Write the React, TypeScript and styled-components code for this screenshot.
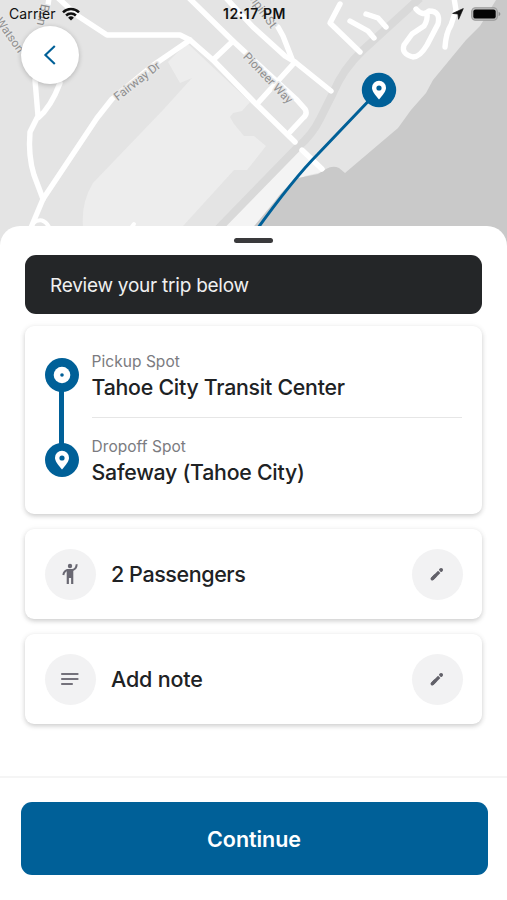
import React from 'react';
import styled, { createGlobalStyle } from 'styled-components';

const BLUE = '#006098';

const GlobalStyle = createGlobalStyle`
  * { box-sizing: border-box; }
  body { margin: 0; background: #fff; font-family: Inter, "Liberation Sans", sans-serif; }
  button { font: inherit; border: 0; padding: 0; cursor: pointer; }
`;

const Screen = styled.main`
  display: flex;
  flex-direction: column;
  width: 507px;
  height: 900px;
  overflow: hidden;
  background: #fff;
  color: #202224;
`;

const MapArea = styled.section`
  position: relative;
  flex: none;
  height: 226px;
`;

const MapCanvas = styled.svg`
  position: absolute;
  top: 0;
  left: 0;
  display: block;
`;

const StatusBar = styled.header`
  position: relative;
  display: grid;
  grid-template-columns: 1fr auto 1fr;
  align-items: center;
  height: 27px;
  padding: 0 6px 0 9px;
  color: #111;
`;

const StatusGroup = styled.div<{ $end?: boolean }>`
  display: flex;
  align-items: center;
  justify-content: ${(p) => (p.$end ? 'flex-end' : 'flex-start')};
  gap: ${(p) => (p.$end ? 7 : 6)}px;
`;

const Carrier = styled.span`
  font-size: 14px;
  line-height: 18px;
  letter-spacing: 0.1px;
`;

const Clock = styled.span`
  font-size: 14px;
  line-height: 18px;
  font-weight: 600;
  letter-spacing: 0.55px;
  margin-left: -1px;
`;

const BackButton = styled.button`
  position: absolute;
  top: 26px;
  left: 21px;
  display: grid;
  place-items: center;
  width: 58px;
  height: 58px;
  border-radius: 50%;
  background: #fff;
  box-shadow: 0 1px 5px rgba(0, 0, 0, 0.22);
`;

const Sheet = styled.section`
  position: relative;
  display: flex;
  flex: 1;
  flex-direction: column;
  border-radius: 20px 20px 0 0;
  background: #fff;
`;

const SheetBackdrop = styled.div`
  display: flex;
  flex: 1;
  background: linear-gradient(90deg, #e4e4e4 50%, #c9c9c9 50%) 0 0 / 100% 40px no-repeat;
`;

const Handle = styled.div`
  width: 39px;
  height: 5px;
  margin: 12px auto;
  border-radius: 3px;
  background: #3a3a3c;
`;

const Content = styled.div`
  display: flex;
  flex: 1;
  flex-direction: column;
  padding: 0 24.6px 0 25.4px;
`;

const Banner = styled.div`
  display: flex;
  align-items: center;
  height: 59px;
  margin-bottom: 12px;
  padding: 2px 24.6px 0;
  border-radius: 11px;
  background: #242628;
  color: #f0f0f0;
  font-size: 19px;
  letter-spacing: -0.24px;
`;

const Card = styled.div`
  border-radius: 9px;
  background: #fff;
  box-shadow: 0 2px 5px rgba(0, 0, 0, 0.19), 0 0 8px rgba(0, 0, 0, 0.03);
`;

const TripCard = styled(Card)`
  display: flex;
  gap: 12.6px;
  height: 188px;
  margin-bottom: 15px;
  padding: 0 20px 0 19.6px;
`;

const Rail = styled.div`
  display: flex;
  flex-direction: column;
  align-items: center;
  padding-top: 32px;
`;

const StopMarker = styled.div`
  display: grid;
  place-items: center;
  flex: none;
  width: 34px;
  height: 34px;
  border-radius: 50%;
  background: ${BLUE};
`;

const RailLine = styled.div`
  width: 5px;
  height: 53px;
  margin: -1px 0;
  background: ${BLUE};
`;

const Stops = styled.div`
  flex: 1;
  padding-top: 24px;
`;

const Stop = styled.div`
  height: 85px;
  & + & { padding-top: 17px; height: 84px; }
  &:first-child { height: 68px; border-bottom: 1px solid #e6e6e6; }
`;

const StopKind = styled.div`
  font-size: 15.5px;
  line-height: 23px;
  letter-spacing: 0.04px;
  color: #7b7b80;
`;

const StopName = styled.div`
  margin-top: -1px;
  font-size: 21.3px;
  line-height: 30px;
  font-weight: 450;
  letter-spacing: -0.24px;
`;

const OptionCard = styled(Card)`
  display: flex;
  align-items: center;
  height: 90px;
  margin-bottom: 15px;
  padding: 0 19.6px;
`;

const IconDisc = styled.div`
  display: grid;
  place-items: center;
  width: 51px;
  height: 51px;
  border-radius: 50%;
  background: #f2f2f3;
`;

const EditButton = styled(IconDisc).attrs({ as: 'button' })``;

const OptionLabel = styled.div<{ $spacing: number }>`
  flex: 1;
  padding-left: 15px;
  font-size: 21.5px;
  line-height: 30px;
  font-weight: 450;
  letter-spacing: ${(p) => p.$spacing}px;
`;

const Footer = styled.footer`
  height: 124px;
  padding: 24px 19.5px 0 20.5px;
  border-top: 2px solid #f5f5f5;
`;

const ContinueButton = styled.button`
  width: 467px;
  height: 73px;
  border-radius: 11px;
  background: ${BLUE};
  color: #fff;
  && { font-size: 21.5px; font-weight: 600; letter-spacing: -0.06px; }
`;

const PinShape = ({ hole = BLUE }: { hole?: string }) => (
  <>
    <path d="M0 9.5C-4.2 4.7-7 1.2-7-2.2A7 7 0 0 1 7-2.2C7 1.2 4.2 4.7 0 9.5Z" fill="#fff" />
    <circle cy="-2" r="2.6" fill={hole} />
  </>
);

const PinIcon = () => (
  <svg width="20" height="22" viewBox="-10 -11 20 22"><PinShape /></svg>
);

const OriginIcon = () => (
  <svg width="18" height="18" viewBox="-9 -9 18 18">
    <circle r="8.3" fill="#fff" />
    <circle r="1.8" fill={BLUE} />
  </svg>
);

const WifiIcon = () => (
  <svg width="18" height="14" viewBox="0 0 18 14" fill="none" stroke="#111" strokeWidth="2.5">
    <path d="M1 5.3A11.4 11.4 0 0 1 17 5.3" />
    <path d="M4.1 8.5A7 7 0 0 1 13.9 8.5" />
    <path d="M9 13.6 6.1 10.7A4.1 4.1 0 0 1 11.9 10.7Z" fill="#111" stroke="none" />
  </svg>
);

const LocationIcon = () => (
  <svg width="12" height="12" viewBox="0 0 12 12"><path d="M11.3.6 6.6 11.3 6 6 .6 5.4Z" fill="#111" stroke="#111" strokeWidth=".7" /></svg>
);

const BatteryIcon = () => (
  <svg width="30" height="14" viewBox="0 0 30 14">
    <rect x=".7" y=".8" width="25.6" height="12.4" rx="3.7" fill="#bdbdbd" stroke="#999" strokeWidth="1.1" />
    <rect x="2.3" y="2.4" width="22.4" height="9.2" rx="2.2" fill="#050505" />
    <path d="M27.6 4.8q1.8.7 1.8 2.2t-1.8 2.2Z" fill="#8e8e8e" />
  </svg>
);

const BackIcon = () => (
  <svg width="14" height="22" viewBox="0 0 14 22" fill="none" stroke={BLUE} strokeWidth="2.1">
    <path d="M11.8 2 2.4 11l9.4 9" />
  </svg>
);

const PassengerIcon = () => (
  <svg width="18" height="22" viewBox="0 0 18 22">
    <circle cx="9" cy="3" r="2.2" fill="#696872" />
    <path d="M15.7 1.2C15.5 4.4 14.3 6.3 11.6 7H7.2C4.5 7.2 2.8 8.6 2.3 12" fill="none" stroke="#696872" strokeWidth="2" />
    <path d="M5.7 6h6.6v15h-2.2v-6.1H7.9V21H5.7Z" fill="#696872" />
  </svg>
);

const NoteIcon = () => (
  <svg width="20" height="14" viewBox="0 0 20 14" stroke="#74727b" strokeWidth="2.1" strokeLinecap="round">
    <path d="M2 2h15.6M2 7h15.6M2 12h10" />
  </svg>
);

const PencilIcon = () => (
  <svg width="14" height="14" viewBox="0 0 14 14" stroke="#626169" fill="none">
    <path d="M2.2 11.8 9.2 4.8" strokeWidth="3.3" />
    <path d="M2.2 11.8 5 9" strokeLinecap="round" strokeWidth="3.2" />
    <path d="m10.3 3.7 1.2-1.2" strokeWidth="3.6" />
    <path d="m11 3 .3-.3" strokeWidth="3.4" strokeLinecap="round" />
  </svg>
);

const roads = [
  'M58-2 78 16 107 35h73l10 5 24 21 40 41 41 40',
  'M189-2 233 41 297 100l8 9q3 5-2 9l-13 14',
  'M226-2 253 27l32 29 10 6 36 29',
  'M278 27 283 36l9 23',
  'M233 41 213 60M295 62 257 104',
  'M190 40 152 66 112 99 97 118 43 199 30 230',
  'M35 80 38 116 30 132q-2 24 4 43l9 24M60 83Q51 107 38 118',
  'M49-2 48 5',
  'M302 150l20 19',
  'M340 4 330 23 360 52M350 21l18 10 6 7M366 14l12 4 8 9',
  'M416 9q7 8 13 2 12 0 9 13L427 45q-7 12-14 12-12-3-9-12l8-11 12-8q4-6 3-13',
  'M454-2l2 12-5 15q-5 8-6 22',
];

const streetLabels = [
  { text: 'Fairway Dr', x: 137, y: 81, angle: -38, size: 11.8 },
  { text: 'Pioneer Way', x: 268, y: 78, angle: 46, size: 11.8 },
  { text: 'Olpin St', x: 262, y: 10, angle: 54, size: 12 },
  { text: 'Watson', x: 10, y: 35, angle: 55, size: 11.8 },
  { text: 'Bun', x: 43, y: 15, angle: 102, size: 12.5 },
];

const TripMap = () => (
  <MapCanvas width="507" height="266" viewBox="0 0 507 266">
    <rect width="507" height="266" fill="#e4e4e4" />
    <path d="M187 43 168 62l12 21 12-5-29 32-70 73q-12 20-10 43h100l51-56h13l19-24-12-10h-10l-10-12-4-7 3-4 9-2 8-9Z" fill="#ededed" />
    <path d="M298 148 219 230h40l26-34 20-20 22-5Z" fill="#f4f4f4" />
    <path d="M507 0H496L480 26 466 40 433 80l-7 13-15 17-13 18-53 45-6-5q-6-3-13 1l-8 5-20 4q-15 11-23 23l-25 30v60h257Z" fill="#c9c9c9" />
    <path d="M420-2 363 50q-20 19-30 43l-13 26q-8 16-22 28L217 230" fill="none" stroke="#d9d9d9" strokeWidth="8" />
    <g fill="none" stroke="#fff" strokeWidth="5.4" strokeLinejoin="round" strokeLinecap="round">
      {roads.map((d) => <path key={d} d={d} />)}
      <path d="M33 223q10-7 16 4M131 228l3-4" strokeWidth="4" />
    </g>
    <g fill="#8f8f8f" stroke="#e7e7e7" strokeWidth="3" strokeLinejoin="round" paintOrder="stroke" fontFamily="Roboto, sans-serif" textAnchor="middle">
      {streetLabels.map((l) => (
        <text key={l.text} fontSize={l.size} dy="4" transform={`translate(${l.x} ${l.y}) rotate(${l.angle})`}>{l.text}</text>
      ))}
    </g>
    <path d="M379 90 318 154Q294 178 255 232" fill="none" stroke={BLUE} strokeWidth="3" />
    <circle cx="379" cy="90" r="17.2" fill={BLUE} />
    <g transform="translate(379 90)"><PinShape /></g>
  </MapCanvas>
);

const stops = [
  { kind: 'Pickup Spot', name: 'Tahoe City Transit Center' },
  { kind: 'Dropoff Spot', name: 'Safeway (Tahoe City)' },
];

const options = [
  { label: '2 Passengers', icon: <PassengerIcon />, spacing: -0.42 },
  { label: 'Add note', icon: <NoteIcon />, spacing: -0.18 },
];

export default function App() {
  return (
    <Screen>
      <GlobalStyle />
      <MapArea>
        <TripMap />
        <StatusBar>
          <StatusGroup><Carrier>Carrier</Carrier><WifiIcon /></StatusGroup>
          <Clock>12:17 PM</Clock>
          <StatusGroup $end><LocationIcon /><BatteryIcon /></StatusGroup>
        </StatusBar>
        <BackButton aria-label="Back"><BackIcon /></BackButton>
      </MapArea>
      <SheetBackdrop>
        <Sheet>
          <Handle />
          <Content>
            <Banner>Review your trip below</Banner>
            <TripCard>
              <Rail>
                <StopMarker><OriginIcon /></StopMarker>
                <RailLine />
                <StopMarker><PinIcon /></StopMarker>
              </Rail>
              <Stops>
                {stops.map((s) => (
                  <Stop key={s.kind}>
                    <StopKind>{s.kind}</StopKind>
                    <StopName>{s.name}</StopName>
                  </Stop>
                ))}
              </Stops>
            </TripCard>
            {options.map((o) => (
              <OptionCard key={o.label}>
                <IconDisc>{o.icon}</IconDisc>
                <OptionLabel $spacing={o.spacing}>{o.label}</OptionLabel>
                <EditButton aria-label={`Edit ${o.label}`}><PencilIcon /></EditButton>
              </OptionCard>
            ))}
          </Content>
          <Footer><ContinueButton>Continue</ContinueButton></Footer>
        </Sheet>
      </SheetBackdrop>
    </Screen>
  );
}
